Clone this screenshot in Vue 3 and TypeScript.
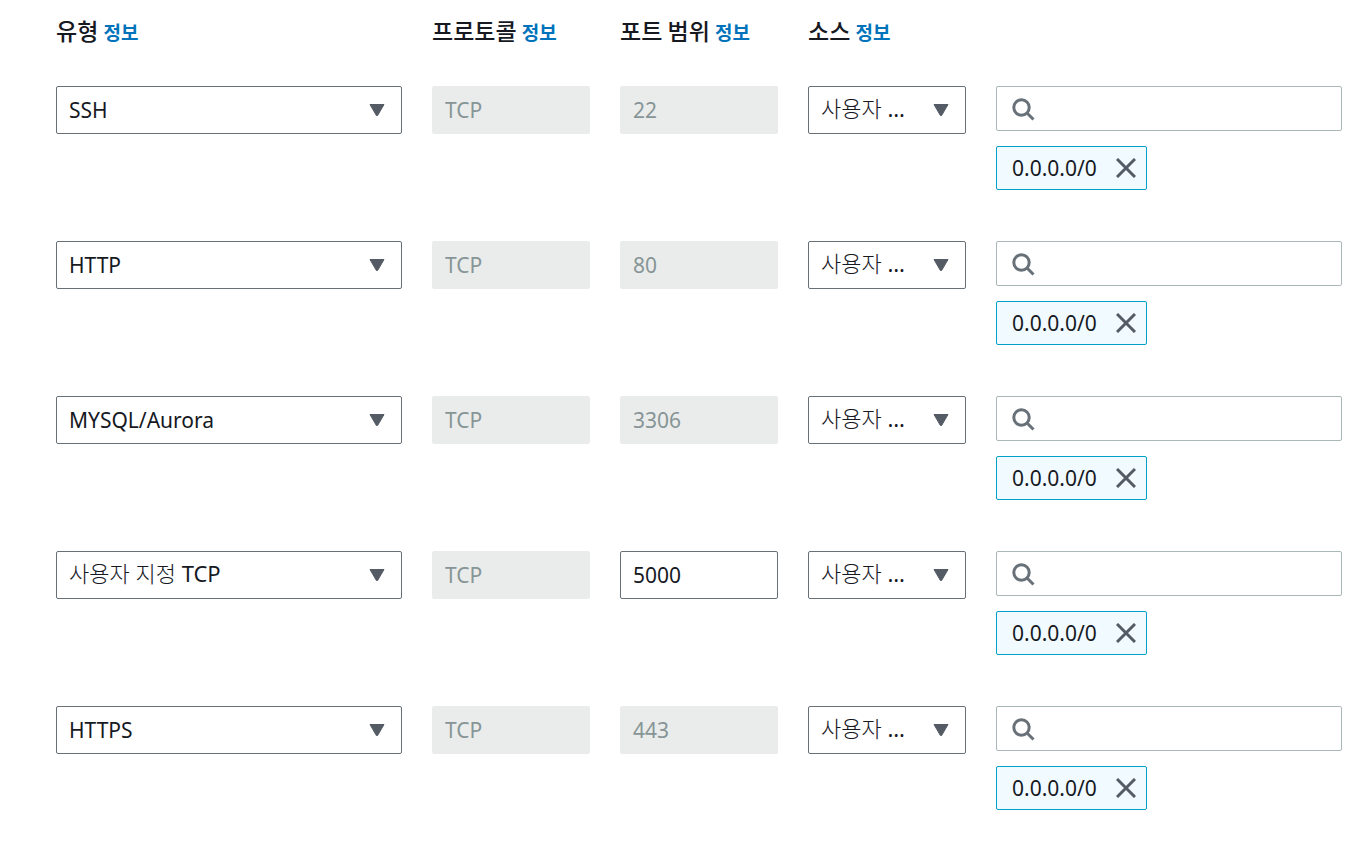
<script setup lang="ts">
import { ref } from 'vue'

interface Rule {
  id: number
  type: string
  protocol: string
  port: string
  custom: boolean
  source: string
  search: string
  cidrs: string[]
}

const headers = ['유형', '프로토콜', '포트 범위', '소스']
const types = ['SSH', 'HTTP', 'MYSQL/Aurora', '사용자 지정 TCP', 'HTTPS']
const sources = ['사용자 지정', 'Anywhere-IPv4', '내 IP']
const ports = ['22', '80', '3306', '5000', '443']

const rules = ref<Rule[]>(
  types.map((type, i) => ({
    id: i + 1,
    type,
    protocol: 'TCP',
    port: ports[i],
    custom: type === '사용자 지정 TCP',
    source: '사용자 지정',
    search: '',
    cidrs: ['0.0.0.0/0'],
  })),
)

function removeCidr(rule: Rule, index: number) {
  rule.cidrs.splice(index, 1)
}
</script>

<template>
  <main class="page">
    <table class="rules">
      <thead>
        <tr class="row head">
          <th v-for="(h, i) in headers" :key="h" scope="col" :class="i === 0 ? 'wide' : 'narrow'">
            {{ h }} <a class="info" href="#">정보</a>
          </th>
        </tr>
      </thead>
      <tbody>
        <tr v-for="rule in rules" :key="rule.id" class="row">
          <td class="wide">
            <div class="select">
              <select v-model="rule.type" :class="{ hangul: rule.custom }" aria-label="유형">
                <option v-for="t in types" :key="t" :value="t">{{ t }}</option>
              </select>
              <svg class="caret" viewBox="0 0 16 14" aria-hidden="true">
                <path d="M1 1.5h14L8.6 12.5H7.4z" />
              </svg>
            </div>
          </td>
          <td class="narrow">
            <input v-model="rule.protocol" class="field" type="text" disabled aria-label="프로토콜" />
          </td>
          <td class="narrow">
            <input v-model="rule.port" class="field" type="text" :disabled="!rule.custom" aria-label="포트 범위" />
          </td>
          <td class="narrow">
            <div class="select">
              <select v-model="rule.source" class="hangul" aria-label="소스">
                <option v-for="s in sources" :key="s" :value="s">{{ s }}</option>
              </select>
              <svg class="caret" viewBox="0 0 16 14" aria-hidden="true">
                <path d="M1 1.5h14L8.6 12.5H7.4z" />
              </svg>
            </div>
          </td>
          <td class="wide">
            <div class="search">
              <svg class="lens" viewBox="0 0 24 24" aria-hidden="true">
                <circle cx="10.5" cy="10.5" r="7.7" />
                <path d="M16 16l6.5 6.5" />
              </svg>
              <input v-model="rule.search" type="search" aria-label="소스 검색" />
            </div>
            <div class="tokens">
              <span v-for="(cidr, i) in rule.cidrs" :key="cidr" class="token">
                {{ cidr }}
                <button type="button" :aria-label="`${cidr} 제거`" @click="removeCidr(rule, i)">
                  <svg viewBox="0 0 20 20" aria-hidden="true">
                    <path d="M1 1l18 18M19 1L1 19" />
                  </svg>
                </button>
              </span>
            </div>
          </td>
        </tr>
      </tbody>
    </table>
  </main>
</template>

<style>
body {
  margin: 0;
  background: #fff;
}
</style>

<style scoped>
.page {
  padding: 14px 27px 0 56px;
  color: #16191f;
  font-family: 'Noto Sans', 'Noto Sans CJK KR', sans-serif;
  font-size: 21px;
  line-height: 32px;
}

.rules,
.rules thead,
.rules tbody {
  display: block;
}

.row {
  display: grid;
  grid-template-columns: repeat(14, minmax(0, 1fr));
  column-gap: 30px;
  padding-bottom: 51px;
}

.head {
  padding-bottom: 38px;
}

.wide {
  grid-column: span 4;
}

.narrow {
  grid-column: span 2;
}

th,
td {
  padding: 0;
  text-align: left;
}

th {
  font-family: 'Noto Sans CJK KR', sans-serif;
  font-size: 23px;
  font-weight: 500;
  white-space: nowrap;
}

.info {
  color: #0073bb;
  font-size: 19px;
  font-weight: 700;
  text-decoration: none;
}

select,
input {
  box-sizing: border-box;
  width: 100%;
  margin: 0;
  border: 1px solid #687078;
  border-radius: 2px;
  background: #fff;
  color: #16191f;
  font: inherit;
  outline: none;
}

.select {
  position: relative;
}

select {
  display: block;
  height: 48px;
  padding: 0 48px 0 12px;
  appearance: none;
  overflow: hidden;
  text-overflow: ellipsis;
}

.hangul {
  padding-bottom: 4px;
  font-family: 'Noto Sans', 'Noto Sans CJK KR Light', 'Noto Sans CJK KR', sans-serif;
  font-size: 22px;
}

.caret {
  position: absolute;
  top: 17px;
  right: 17px;
  width: 16px;
  height: 14px;
  fill: #545b64;
  stroke: #545b64;
  stroke-width: 1;
  stroke-linejoin: round;
  pointer-events: none;
}

.field {
  display: block;
  height: 48px;
  padding: 0 12px;
}

.field:disabled {
  border-color: #eaeceb;
  background: #eaeceb;
  color: #879596;
}

.search {
  display: flex;
  align-items: center;
  box-sizing: border-box;
  height: 45px;
  padding-left: 14px;
  border: 1px solid #aab7b8;
  border-radius: 2px;
}

.search input {
  flex: 1;
  min-width: 0;
  height: 40px;
  padding: 0 12px;
  border: 0;
  appearance: none;
}

.lens {
  flex: none;
  width: 24px;
  height: 24px;
  fill: none;
  stroke: #687078;
  stroke-width: 3;
}

.tokens {
  display: flex;
  flex-wrap: wrap;
  gap: 8px;
  min-height: 44px;
  margin-top: 15px;
}

.token {
  display: flex;
  align-items: center;
  gap: 19px;
  box-sizing: border-box;
  height: 44px;
  padding: 0 10px 0 15px;
  border: 1px solid #00a1c9;
  border-radius: 2px;
  background: #f1faff;
}

.token button {
  display: block;
  padding: 0;
  border: 0;
  background: none;
  cursor: pointer;
}

.token svg {
  display: block;
  width: 20px;
  height: 20px;
  fill: none;
  stroke: #545b64;
  stroke-width: 3;
}
</style>
